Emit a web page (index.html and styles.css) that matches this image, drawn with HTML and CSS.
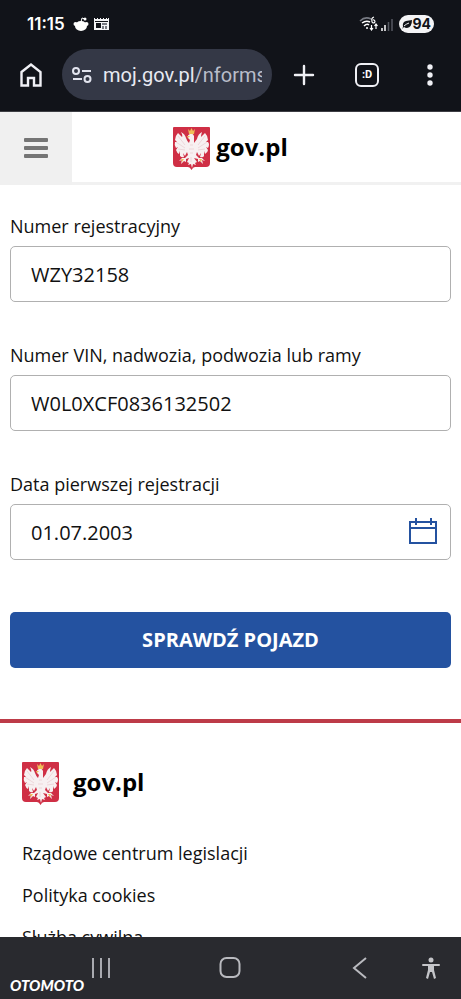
FILE: index.html
```
<!DOCTYPE html>
<html lang="pl">
<head>
<meta charset="utf-8">
<meta name="viewport" content="width=device-width, initial-scale=1">
<title>gov.pl</title>
<link rel="stylesheet" href="styles.css">
</head>
<body>
<svg class="defs" aria-hidden="true">
  <symbol id="emblem" viewBox="0 0 37 43">
    <path fill="#cf2f45" d="M1 0H36Q37 0 37 1V36Q37 40 33 40H22Q20 40 18.500 43Q17 40 15 40H4Q0 40 0 36V1Q0 0 1 0Z"/>
    <path fill="#f7f0f1" d="M17 7Q14 8 15 11L17 13L16 16Q14 14 13 11Q12 7 8 5Q10 9 9 10L5 6Q2 9 2 13L4 15L2 15Q1 18 3 21L5 20L3 23Q4 26 6 27L7 24L7 29Q9 31 11 30L10 26L12 29L14 25L15 28L12 31L9 31L6 34L9 33L8 37L11 34L13 35L13 32L16 31L14 35L16 36L15 38L18 37L19 41L20 37L23 38L22 36L24 35L21 31L25 32L25 35L27 34L30 37L29 33L32 34L29 31L26 31L23 28L24 25L26 29L28 26L27 30Q30 31 31 29L31 24L32 27Q35 25 35 23L33 20L35 21Q37 17 35 15L33 15L35 13Q35 9 32 6L28 10Q28 8 29 5Q25 7 24 12L21 16L21 9Q20 6 17 7Z"/>
    <path fill="none" stroke="#e3bcc3" stroke-width=".5" d="M5 9L12 18M3 15L12 21M5 22L12 23M32 9L25 18M34 15L25 21M32 22L25 23M17 18L20 18M16 22L21 22M17 26L20 26M18 30V35"/>
    <path fill="#f0bd58" d="M15 2L17 4L18.500 1L20 4L22 2L21 7H16ZM14 9L17 9L15 11ZM8 32L11 32L9 35ZM26 32L29 32L28 35Z"/>
  </symbol>
</svg>

<header class="browser">
  <div class="status">
    <span class="clock">11:15</span>
    <svg class="reddit" width="16" height="16" viewBox="0 0 16 16" fill="#fff" aria-hidden="true"><ellipse cx="8" cy="10" rx="6" ry="5"/><circle cx="2.500" cy="8" r="2"/><circle cx="13.500" cy="8" r="2"/><circle cx="12" cy="3" r="1.500"/><path d="M8 6L9 2L12 3" fill="none" stroke="#fff"/></svg>
    <svg class="news" width="15" height="14" viewBox="0 0 15 14" aria-hidden="true"><path fill="#f4f4f6" d="M0 1H1V2H3V1H4V2H6V1H7V2H9V1H10V2H12V1H13V2H14V1H15V13H0Z"/><path fill="#111319" d="M1 4H14V5H1ZM2 6H7V11H2Z"/><path fill="#777a83" d="M8 6H13V8H8ZM8 9H10V12H8ZM11 9H13V12H11Z"/></svg>
    <svg class="wifi" width="20" height="16" viewBox="0 0 20 16" fill="none" stroke="#fff" stroke-width="1.500" aria-hidden="true"><path stroke="#777a83" d="M1 5Q6 0 12 3"/><path d="M3 7Q7 4 11 6M5 10Q8 7 10 9"/><circle cx="8" cy="12" r="1" fill="#fff" stroke="none"/><path stroke-width="1.200" d="M15 1Q12 2 13 5A1.500 1.500 0 1 0 14 4M12.500 9V14M11 12L12.500 14L14 12M17 13V8M15.500 10L17 8L18.500 10"/></svg>
    <svg class="signal" width="12" height="14" viewBox="0 0 12 14" aria-hidden="true"><path stroke="#fff" stroke-width="1.500" d="M1 11V14M4 8V14"/><path stroke="#555861" stroke-width="1.500" d="M7.500 5V14M11 2V14"/></svg>
    <span class="battery"><svg width="10" height="10" viewBox="0 0 10 10" aria-hidden="true"><path fill="#111319" d="M1 8Q0 3 4 2L10 1Q10 8 5 9Q3 9 2 8L0 10Z"/><path d="M2 7Q4 5 7 4" fill="none" stroke="#f4f4f6"/></svg>94</span>
  </div>
  <div class="toolbar">
    <button class="tool" type="button" aria-label="Strona startowa"><svg width="24" height="26" viewBox="0 0 24 26" fill="none" stroke="#f0f0f5" stroke-width="2.400"><path d="M2.500 10L12 2.500L21.500 10V23.500H15V16H9V23.500H2.500Z"/></svg></button>
    <div class="address">
      <svg class="tune" width="20" height="18" viewBox="0 0 20 18" fill="none" stroke="#e2e4ee" stroke-width="2" aria-hidden="true"><circle cx="4" cy="5" r="3"/><path d="M10 5H19M1 13H10"/><circle cx="15.500" cy="13" r="3"/></svg>
      <a class="url" href="#">moj.gov.pl<span class="path">/nforms</span></a>
    </div>
    <div class="actions">
      <button class="tool" type="button" aria-label="Nowa karta"><svg width="24" height="24" viewBox="0 0 24 24" stroke="#f0f0f5" stroke-width="2.400" stroke-linecap="round"><path d="M3 12H21M12 3V21"/></svg></button>
      <button class="tool" type="button" aria-label="Karty"><span class="tabs">:D</span></button>
      <button class="tool" type="button" aria-label="Menu przeglądarki"><svg width="24" height="24" viewBox="0 0 24 24" fill="#f0f0f5"><circle cx="12" cy="4" r="2.700"/><circle cx="12" cy="12" r="2.700"/><circle cx="12" cy="20" r="2.700"/></svg></button>
    </div>
  </div>
</header>

<div class="page">
  <div class="site-header">
    <button class="menu" type="button" aria-label="Menu"><svg width="24" height="22" viewBox="0 0 24 22" fill="#757575"><rect y="1" width="24" height="4" rx="1"/><rect y="9" width="24" height="4" rx="1"/><rect y="17" width="24" height="4" rx="1"/></svg></button>
    <a class="brand" href="#"><svg class="emblem" aria-hidden="true"><use href="#emblem"/></svg><span class="wordmark">gov.pl</span></a>
  </div>
  <main>
    <form class="form">
      <div class="field">
        <label for="plate">Numer rejestracyjny</label>
        <input id="plate" type="text" value="WZY32158">
      </div>
      <div class="field">
        <label for="vin">Numer VIN, nadwozia, podwozia lub ramy</label>
        <input id="vin" type="text" value="W0L0XCF0836132502">
      </div>
      <div class="field">
        <label for="date">Data pierwszej rejestracji</label>
        <div class="date">
          <input id="date" type="text" value="01.07.2003">
          <button class="calendar" type="button" aria-label="Wybierz datę"><svg width="28" height="26" viewBox="0 0 28 26" fill="none" stroke="#2452a0" stroke-width="2"><path d="M1 4H27V25H1ZM1 10H27M7 0V7M22 0V7"/></svg></button>
        </div>
      </div>
      <button class="submit" type="button">SPRAWDŹ POJAZD</button>
    </form>
  </main>
  <footer class="site-footer">
    <a class="brand footer-brand" href="#"><svg class="emblem" aria-hidden="true"><use href="#emblem"/></svg><span class="wordmark">gov.pl</span></a>
    <ul class="links">
      <li><a href="#">Rządowe centrum legislacji</a></li>
      <li><a href="#">Polityka cookies</a></li>
      <li><a href="#">Służba cywilna</a></li>
    </ul>
  </footer>
</div>

<nav class="system">
  <button type="button" aria-label="Ostatnie"><svg width="24" height="24" viewBox="0 0 24 24" stroke="#a9aab0" stroke-width="2"><path d="M4 2V22M12 2V22M20 2V22"/></svg></button>
  <button type="button" aria-label="Ekran główny"><svg width="24" height="24" viewBox="0 0 24 24" fill="none" stroke="#b9babf" stroke-width="2"><rect x="2.500" y="2" width="19" height="19" rx="6"/></svg></button>
  <button type="button" aria-label="Wstecz"><svg width="24" height="24" viewBox="0 0 24 24" fill="none" stroke="#b9babf" stroke-width="2"><path d="M18 2L6 12L18 22"/></svg></button>
  <button class="access" type="button" aria-label="Ułatwienia dostępu"><svg width="20" height="24" viewBox="0 0 20 24" fill="#c4c5c9"><circle cx="10" cy="4" r="2.500"/><path d="M2 8H18Q19 8 19 9T18 10H13V14L15 22L13 23L11 16H9L7 23L5 22L7 14V10H2Q1 10 1 9T2 8Z"/></svg></button>
  <span class="watermark">OTOMOTO</span>
</nav>
</body>
</html>
```
FILE: styles.css
```
* { box-sizing: border-box; }
body {
  margin: 0;
  height: 100vh;
  display: flex;
  flex-direction: column;
  overflow: hidden;
  background: #fff;
  color: #111;
  font: 18px/24px "Open Sans", sans-serif;
}
button { padding: 0; border: 0; background: none; font: inherit; color: inherit; }
a { color: inherit; text-decoration: none; }
svg { display: block; flex: none; }
.defs { position: absolute; width: 0; height: 0; }

.browser { flex: none; background: #111319; color: #fff; border-bottom: 1px solid #3d3e44; }
.status { height: 48px; display: flex; align-items: center; padding: 0 27px; }
.clock { font: 600 17px/20px Inter, sans-serif; }
.reddit { margin-left: 8px; }
.news { margin-left: 5px; }
.wifi { margin-left: auto; }
.signal { margin: 0 6px 0 2px; }
.battery {
  display: flex;
  align-items: center;
  height: 18px;
  padding: 0 3px;
  border-radius: 9px;
  background: #f4f4f6;
  color: #111319;
  font: 700 14px/18px Inter, sans-serif;
}
.toolbar { height: 63px; display: flex; align-items: flex-start; padding: 1px 19px 0; gap: 20px; }
.actions { display: flex; gap: 39px; }
.toolbar > .tool { margin-right: -1px; }
.tool { flex: none; width: 24px; height: 52px; display: flex; align-items: center; justify-content: center; }
.address {
  flex: 1;
  min-width: 0;
  height: 51px;
  display: flex;
  align-items: center;
  gap: 11px;
  padding: 0 10px;
  border-radius: 26px;
  background: #343846;
}
.url {
  min-width: 0;
  overflow: hidden;
  white-space: nowrap;
  font: 20px/28px Roboto, sans-serif;
  color: #e8eaf2;
}
.path { color: #b9bdca; }
.tabs {
  flex: none;
  width: 24px;
  height: 24px;
  border: 2px solid #f0f0f5;
  border-radius: 6px;
  text-align: center;
  font: 700 11px/20px Roboto, sans-serif;
}

.page { flex: 1; min-height: 0; overflow: hidden; }
.site-header {
  display: grid;
  grid-template-columns: 72px 1fr 72px;
  height: 73px;
  border-bottom: 3px solid #f1f1f1;
}
.menu { height: 73px; padding-bottom: 2px; background: #f0f0f0; display: flex; align-items: center; justify-content: center; }
.brand {
  display: flex;
  align-items: center;
  justify-content: center;
  gap: 6px;
  font-size: 24px;
  line-height: 32px;
  font-weight: 700;
  color: #000;
}
.wordmark { padding-bottom: 4px; }
.emblem { width: 37px; height: 43px; }

.form { padding: 29px 10px 51px; }
.field { margin-bottom: 41px; }
label { display: block; margin-bottom: 8px; }
input {
  display: block;
  width: 100%;
  height: 56px;
  padding: 0 20px;
  border: 1px solid #b0b0b0;
  border-radius: 5px;
  background: #fff;
  color: #111;
  font: 20px/28px "Open Sans", sans-serif;
}
.date { position: relative; }
.calendar { position: absolute; right: 14px; top: 14px; }
.submit {
  display: block;
  width: 100%;
  height: 56px;
  margin-top: 52px;
  border-radius: 5px;
  background: #2452a0;
  color: #fff;
  font-size: 20px;
  font-weight: 700;
}

.site-footer { border-top: 4px solid #bd3b48; padding: 39px 22px; }
.footer-brand { justify-content: flex-start; gap: 14px; }
.links { list-style: none; margin: 36px 0 0; padding: 0; display: grid; gap: 18px; }

.system {
  position: relative;
  flex: none;
  height: 62px;
  display: grid;
  grid-template-columns: 1fr 1fr 1fr;
  align-items: center;
  padding: 0 36px;
  background: #292a2f;
}
.system button { justify-self: center; }
.system .access { position: absolute; right: 20px; top: 19px; }
.watermark {
  position: absolute;
  left: 10px;
  bottom: 6px;
  color: #fff;
  font: italic 900 15px/16px Lato, sans-serif;
}
```
